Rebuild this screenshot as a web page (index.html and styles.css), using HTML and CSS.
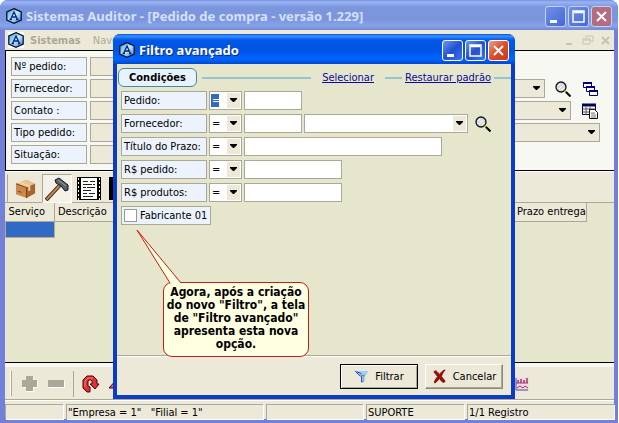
FILE: index.html
```html
<!DOCTYPE html>
<html lang="pt-BR">
<head>
    <meta charset="UTF-8">
    <meta name="viewport" content="width=device-width, initial-scale=1.0">
    <title>Sistemas Auditor - [Pedido de compra - versão 1.229]</title>
    <link rel="stylesheet" href="styles.css">
</head>
<body>
    <svg class="symbols" aria-hidden="true">
        <defs>
            <linearGradient id="hexFill" x1="0" y1="0" x2="1" y2="1">
                <stop offset="0" stop-color="#3f9ae4"/>
                <stop offset="0.5" stop-color="#c4e6fc"/>
                <stop offset="1" stop-color="#2f7ad0"/>
            </linearGradient>
        </defs>
        <symbol id="logo" viewBox="0 0 16 16">
            <path d="M8 0.7L15.200 4v8L8 15.3L0.800 12V4z" fill="url(#hexFill)" stroke="#04122e" stroke-width="1.3"/>
            <path d="M4.5 11.5L8 4l3.5 7.5M6 9h4M3.5 11.5h2.5M10 11.5h2.5" fill="none" stroke="#0b2878" stroke-width="1.3"/>
        </symbol>
        <symbol id="lens" viewBox="0 0 16 16">
            <circle cx="6" cy="6" r="5" fill="#d5dde2" stroke="#111" stroke-width="1.3"/>
            <path d="M3 5l2-2M4 8l4-4M7 9l2-2" stroke="#fff"/>
            <path d="M9.5 9.5l2 2" stroke="#b4b820" stroke-width="2"/>
            <path d="M11 11l4.5 4.5" stroke="#000" stroke-width="2"/>
        </symbol>
    </svg>

    <div class="main-window">
        <div class="title-bar">
            <svg class="icon"><use href="#logo"/></svg>
            <h1>Sistemas Auditor - [Pedido de compra - versão 1.229]</h1>
            <div class="window-buttons">
                <button class="win-btn" aria-label="Minimizar"><svg viewBox="0 0 19 19"><path d="M4 13h7v3H4z" fill="#fff"/></svg></button>
                <button class="win-btn" aria-label="Maximizar"><svg viewBox="0 0 19 19"><path d="M4 4h11v11H4zM5 5.500h9" fill="none" stroke="#fff" stroke-width="1.500"/></svg></button>
                <button class="win-btn close" aria-label="Fechar"><svg viewBox="0 0 19 19"><path d="M5 5l9 9M14 5l-9 9" stroke="#fff" stroke-width="2"/></svg></button>
            </div>
        </div>

        <div class="menu-bar">
            <svg class="icon"><use href="#logo"/></svg>
            <b>Sistemas</b>
            <span>Navegar</span>
            <div class="child-buttons">
                <svg viewBox="0 0 13 14"><path d="M3 11h6" stroke="#c6c3b4" stroke-width="2"/></svg>
                <svg viewBox="0 0 13 14"><path d="M5 5V3h7v5h-2M2 6h7v5H2zM2 7h7" fill="none" stroke="#c6c3b4"/></svg>
                <svg viewBox="0 0 13 14"><path d="M3 4l7 7M10 4l-7 7" stroke="#c6c3b4" stroke-width="2"/></svg>
            </div>
        </div>

        <form class="order-form">
            <div class="row"><label for="o-num">Nº pedido:</label><input class="box off short" id="o-num"></div>
            <div class="row to-lens">
                <label for="o-for">Fornecedor:</label><select class="box off grow" id="o-for"></select>
                <svg class="icon"><use href="#lens"/></svg>
                <svg class="icon" viewBox="0 0 16 16">
                    <g fill="#fff" stroke="#000080"><path d="M1.500 1.500h8v5h-8z"/><path d="M4.500 5.500h8v5h-8z"/><path d="M7.500 9.500h8v5h-8z"/></g>
                    <path d="M1 2h9M4 6h9M7 10h9" stroke="#000080" stroke-width="2"/>
                </svg>
            </div>
            <div class="row to-list">
                <label for="o-con">Contato :</label><select class="box off grow" id="o-con"></select>
                <svg class="icon" viewBox="0 0 16 16">
                    <path d="M0.500 1.500h13v10h-13z" fill="#fff" stroke="#000040"/>
                    <path d="M0 2h14" stroke="#000060" stroke-width="3"/>
                    <path d="M1 6h12M1 9h12M4 4v8M8 4v8" stroke="#555"/>
                    <path d="M7.500 6.500h5l3 3v6h-8z" fill="#fff" stroke="#111"/>
                    <path d="M9 10h4M9 12h5M9 14h5" stroke="#777"/>
                </svg>
            </div>
            <div class="row"><label for="o-tip">Tipo pedido:</label><select class="box off grow" id="o-tip"></select></div>
            <div class="row"><label for="o-sit">Situação:</label><input class="box off short" id="o-sit"></div>
        </form>

        <div class="tab-bar">
            <button class="tab" aria-label="Produtos">
                <svg viewBox="0 0 22 22">
                    <path d="M1 6l11-4 9 4v10l-9 5-11-4z" fill="#c98a4b"/>
                    <path d="M1 6l11-4 9 4-9 4z" fill="#edc28f"/>
                    <path d="M12 10l9-4v10l-9 5z" fill="#a5652e"/>
                    <path d="M6 4l10 4v5l-2 1V9L4 5z" fill="#f1d6aa"/>
                    <path d="M1 6l11 4v11M3 14l4 1" fill="none" stroke="#75431c"/>
                </svg>
            </button>
            <button class="tab active" aria-label="Serviços">
                <svg viewBox="0 0 24 24">
                    <path d="M1 23L16 7" stroke="#3a2010" stroke-width="4"/>
                    <path d="M1.500 22.500L16 7" stroke="#c48755" stroke-width="2"/>
                    <path d="M10 3l4-2 9 7v5l-3 1-4-5-5-3z" fill="#566069" stroke="#14181c"/>
                    <path d="M13 3l8 6" stroke="#99a5ad"/>
                </svg>
            </button>
            <button class="tab" aria-label="Observações">
                <svg viewBox="0 0 24 24">
                    <path d="M0 0h24v23H0z" fill="#000"/>
                    <path d="M4 1h16v21H4z" fill="#fff"/>
                    <path d="M1.500 1v22M22.500 1v22" stroke="#fff" stroke-dasharray="2 2"/>
                    <path d="M6 4.500h5M13 4.500h5M6 7.500h9M16 7.500h2M6 10.500h3M10 10.500h8M6 13.500h8M6 16.500h4M12 16.500h6M6 19.500h10" stroke="#222"/>
                </svg>
            </button>
            <button class="tab" aria-label="Outros"><svg viewBox="0 0 24 24"><path d="M0 0h24v23H0z"/></svg></button>
        </div>

        <div class="grid">
            <table>
                <thead><tr><th class="c-serv">Serviço</th><th>Descrição</th><th class="c-prazo">Prazo entrega</th><th class="c-end"></th></tr></thead>
                <tbody><tr><td class="selected"></td><td></td><td></td><td></td></tr></tbody>
            </table>
        </div>

        <div class="tool-bar">
            <i class="grip"></i>
            <button class="tool" aria-label="Incluir"><svg viewBox="0 0 18 18"><path d="M6 2h7v4h4v7h-4v4H6v-4H2V6h4z" fill="#fff"/><path d="M5 1h7v4h4v7h-4v4H5v-4H1V5h4z" fill="#aca899"/></svg></button>
            <button class="tool" aria-label="Excluir"><svg viewBox="0 0 18 18"><path d="M2 6h16v7H2z" fill="#fff"/><path d="M1 5h16v7H1z" fill="#aca899"/></svg></button>
            <button class="tool split" aria-label="Atualizar">
                <svg viewBox="0 0 18 18">
                    <path d="M8 17H5L1 13V5l4-4h6l4 4v4h2l-4 5-5-5h2V6L9 5H7L6 6v5l2 1z" fill="#e03030" stroke="#4a0008"/>
                    <path d="M3 12V6l3-3h5" fill="none" stroke="#ff8070"/>
                </svg>
            </button>
            <button class="tool" aria-label="Editar"><svg viewBox="0 0 18 18"><path d="M1 13l9-10 5 10z" fill="#d45a8e" stroke="#400020"/></svg></button>
            <button class="tool chart" aria-label="Gráfico">
                <svg viewBox="0 0 14 14"><path d="M0 0h14v14H0z" fill="#e8dcec"/><path d="M1 1v12h12M1 6h12" fill="none" stroke="#505090"/><path d="M3 6V3M6 6V2M9 6V3M12 6V1" stroke="#d02050" stroke-width="1.500"/><path d="M2 11l3-2 3 2 2-2 3 2" fill="none" stroke="#d02050"/></svg>
            </button>
        </div>

        <div class="status-bar">
            <span class="s1"></span>
            <span class="s2">"Empresa = 1" &nbsp; "Filial = 1"</span>
            <span class="s3"></span>
            <span class="s4">SUPORTE</span>
            <span class="s5">1/1 Registro</span>
        </div>
    </div>

    <div class="dialog" role="dialog" aria-labelledby="dlg-title">
        <div class="title-bar">
            <svg class="icon"><use href="#logo"/></svg>
            <h2 id="dlg-title">Filtro avançado</h2>
            <div class="window-buttons">
                <button class="win-btn" aria-label="Minimizar"><svg viewBox="0 0 19 19"><path d="M4 13h7v3H4z" fill="#fff"/></svg></button>
                <button class="win-btn" aria-label="Maximizar"><svg viewBox="0 0 19 19"><path d="M4 4h11v11H4zM5 5.500h9" fill="none" stroke="#fff" stroke-width="1.500"/></svg></button>
                <button class="win-btn close" aria-label="Fechar"><svg viewBox="0 0 19 19"><path d="M5 5l9 9M14 5l-9 9" stroke="#fff" stroke-width="2"/></svg></button>
            </div>
        </div>

        <form class="filter">
            <div class="filter-head">
                <h3>Condições</h3>
                <i class="rule grow"></i>
                <a class="pick" href="#">Selecionar</a>
                <i class="rule"></i>
                <a href="#">Restaurar padrão</a>
                <i class="rule"></i>
            </div>

            <div class="row">
                <label for="f-ped">Pedido:</label>
                <select class="box op focused" aria-label="Operador pedido"><option>=</option></select>
                <input class="box small" id="f-ped">
            </div>
            <div class="row">
                <label for="f-for">Fornecedor:</label>
                <select class="box op" aria-label="Operador fornecedor"><option>=</option></select>
                <input class="box small" id="f-for">
                <select class="box combo" aria-label="Nome do fornecedor"></select>
                <svg class="icon"><use href="#lens"/></svg>
            </div>
            <div class="row">
                <label for="f-tit">Título do Prazo:</label>
                <select class="box op" aria-label="Operador prazo"><option>=</option></select>
                <input class="box large" id="f-tit">
            </div>
            <div class="row">
                <label for="f-rped">R$ pedido:</label>
                <select class="box op" aria-label="Operador valor do pedido"><option>=</option></select>
                <input class="box medium" id="f-rped">
            </div>
            <div class="row">
                <label for="f-rpro">R$ produtos:</label>
                <select class="box op" aria-label="Operador valor dos produtos"><option>=</option></select>
                <input class="box medium" id="f-rpro">
            </div>
            <div class="row">
                <label class="check"><input type="checkbox">Fabricante 01</label>
            </div>
        </form>

        <div class="dialog-buttons">
            <button class="push default">
                <svg viewBox="0 0 16 16"><path d="M1 2h14l-4 6v5l-3 2V8z" fill="#5b8fe0"/><path d="M1 2h14l-3 4H4z" fill="#a4d0f4"/><path d="M3 3l5 2M8 8v6M1 2l6 6" stroke="#2848b0"/><path d="M9.500 8v5" stroke="#cde6fa"/></svg>
                Filtrar
            </button>
            <button class="push">
                <svg viewBox="0 0 16 16"><path d="M2 3c2-2 3-1 6 3 2-3 3-4 6-5-2 2-3 4-4 7l4 5c-1 2-3 2-6-3-2 2-3 4-5 5-1-2 1-4 3-7z" fill="#a01008" stroke="#7c0800"/></svg>
                Cancelar
            </button>
        </div>

        <div class="callout">
            Agora, após a criação do novo "Filtro", a tela de "Filtro avançado" apresenta esta nova opção.
            <svg class="tail" viewBox="0 0 48 55"><path d="M35 54L2 1l44 53" fill="#ffffe1" stroke="#d01810"/></svg>
        </div>
    </div>
</body>
</html>
```

FILE: styles.css
```css
* {
    box-sizing: border-box;
}
body {
    margin: 0;
    height: 100vh;
    position: relative;
    overflow: hidden;
    background: #fff;
    font-family: "DejaVu Sans Condensed", Tahoma, "DejaVu Sans", sans-serif;
    font-size: 11px;
    line-height: 15px;
    color: #000;
}
h1, h2, h3 {
    margin: 0;
}
button, input, select {
    font: inherit;
    color: inherit;
    margin: 0;
    padding: 0;
}
.symbols {
    position: absolute;
    width: 0;
    height: 0;
}
.icon {
    width: 16px;
    height: 16px;
    flex: none;
}
.grow {
    flex: 1;
}

/* main window */
.main-window {
    display: flex;
    flex-direction: column;
    height: 100vh;
    margin-right: 1px;
    padding: 0 4px 4px 5px;
    background: #7280da;
    border-radius: 8px 8px 0 0;
    overflow: hidden;
}
.title-bar {
    display: flex;
    align-items: center;
    gap: 4px;
    height: 30px;
    flex: none;
    color: #d4e0fa;
}
.main-window .title-bar {
    margin: 0 -4px 0 -5px;
    padding: 2px 6px 0;
    background: linear-gradient(#7692e4 0, #9ab4f2 2px, #7c96de 7px, #7c96de 20px, #86a4ea 26px, #7286d4 30px);
}
.title-bar h1, .title-bar h2 {
    flex: 1;
    white-space: nowrap;
    font-family: "Noto Sans", "Trebuchet MS", sans-serif;
    font-size: 13px;
    line-height: 18px;
    font-weight: bold;
}
.window-buttons {
    display: flex;
    gap: 2px;
}
.win-btn {
    width: 21px;
    height: 21px;
    border: 1px solid #fff;
    border-radius: 3px;
    background: linear-gradient(135deg, #6f96f0, #2350d0 50%, #3c74ee);
}
.win-btn svg {
    display: block;
    width: 19px;
    height: 19px;
}
.win-btn.close {
    background: linear-gradient(135deg, #eea08a, #dc4c26 50%, #c83c18);
}
.main-window .win-btn {
    border-color: #c4d0f6;
    background: linear-gradient(135deg, #7090e6, #4468d8);
}
.main-window .win-btn.close {
    background: #b46c80;
}
.menu-bar {
    display: flex;
    align-items: center;
    gap: 6px;
    height: 20px;
    flex: none;
    padding-left: 3px;
    background: #ece9d8;
    color: #aca899;
}
.menu-bar .icon {
    background: #fff;
}
.menu-bar span {
    padding-left: 6px;
}
.child-buttons {
    display: flex;
    gap: 5px;
    margin-left: auto;
    padding-right: 2px;
}
.child-buttons svg {
    width: 13px;
    height: 14px;
}
.order-form {
    display: flex;
    flex-direction: column;
    gap: 3px;
    height: 121px;
    flex: none;
    padding: 6px 14px 0 5px;
    background: #f8f8f2;
    border: solid #000;
    border-width: 1px 0 1px 1px;
}
.row {
    display: flex;
    align-items: center;
    gap: 3px;
    height: 19px;
}
.row label {
    width: 76px;
    height: 19px;
    flex: none;
    padding: 1px 2px 0;
    border: 1px solid #aca899;
    background: #ecf3fc;
    white-space: nowrap;
}
.row .icon {
    margin-left: 7px;
}
.to-lens, .to-list {
    padding-right: 2px;
}
.order-form .icon:last-child {
    margin-left: 8px;
}
.box {
    appearance: none;
    height: 19px;
    min-width: 0;
    border: 1px solid #aca899;
    border-radius: 0;
    background-color: #fff;
    outline: none;
}
select.box {
    padding-left: 2px;
    background-image: url("data:image/svg+xml,%3Csvg xmlns='http://www.w3.org/2000/svg' width='13' height='15'%3E%3Cpath fill='%23ece9d8' d='M0 0h13v15H0z'/%3E%3Cpath d='M3 5h7v1L7 9H6L3 6z'/%3E%3C/svg%3E");
    background-repeat: no-repeat;
    background-position: right 1px top 1px;
}
.box.off {
    background-color: #ece9d8;
}
.box.short {
    width: 120px;
}
.tab-bar {
    display: flex;
    gap: 2px;
    height: 32px;
    flex: none;
    padding: 2px 2px 0;
    background: #ece9d8;
    border-top: 1px solid #fff;
    border-bottom: 1px solid #aca899;
}
.tab {
    display: flex;
    align-items: center;
    justify-content: center;
    width: 30px;
    height: 29px;
    border: 1px solid transparent;
    background: none;
}
.tab:first-child {
    width: 33px;
    border-left-color: #aca899;
    padding-left: 4px;
}
.tab.active {
    background: #f4f2e8;
    border-color: #aca899 #fff #fff #aca899;
}
.tab svg {
    width: 24px;
    height: 24px;
    flex: none;
}
.tab:first-child svg {
    width: 21px;
    height: 21px;
}
.grid {
    flex: 1;
    min-height: 0;
    background: #e6e6cc;
    border-bottom: 1px solid #000;
}
table {
    width: 100%;
    table-layout: fixed;
    border-collapse: collapse;
}
th {
    height: 18px;
    padding: 0 3px;
    background: #ece9d8;
    border-right: 1px solid #aca899;
    border-bottom: 1px solid #aca899;
    font-weight: normal;
    text-align: left;
    white-space: nowrap;
}
.c-serv {
    width: 49px;
}
.c-prazo {
    width: 73px;
}
.c-end {
    width: 27px;
    border: none;
    background: none;
}
td {
    height: 16px;
    padding: 0;
}
td.selected {
    background: #316ac5;
    border: 1px solid #c0a878;
}
.tool-bar {
    display: flex;
    align-items: center;
    gap: 8px;
    height: 37px;
    flex: none;
    padding: 1px 85px 0 5px;
    background: #ece9d8;
    border-top: 4px solid #f8f8f2;
    border-bottom: 1px solid #aca899;
}
.grip {
    width: 2px;
    height: 25px;
    margin-right: 1px;
    border-left: 1px solid #fff;
    border-right: 1px solid #aca899;
}
.tool {
    height: 26px;
    border: none;
    background: none;
}
.tool svg {
    display: block;
    width: 18px;
    height: 18px;
}
.tool.split {
    padding-left: 8px;
    border-left: 1px solid #aca899;
}
.tool.chart {
    margin-left: auto;
}
.tool.chart svg {
    width: 14px;
    height: 14px;
}
.status-bar {
    display: flex;
    gap: 3px;
    height: 19px;
    flex: none;
    padding-top: 3px;
    background: #ece9d8;
    border-top: 1px solid #fff;
}
.status-bar span {
    height: 15px;
    padding-left: 1px;
    border: solid #aca899;
    border-width: 1px 0 0 1px;
    box-shadow: 1px 1px #fff;
    white-space: nowrap;
}
.s1 { width: 58px; }
.s2 { width: 197px; }
.s3 { width: 97px; }
.s4 { width: 98px; }
.s5 { flex: 1; }

/* filter dialog, floats over the main window */
.dialog {
    position: absolute;
    left: 113px;
    top: 34px;
    width: 402px;
    display: flex;
    flex-direction: column;
    padding: 0 4px 4px;
    background: #0a3cc8;
    border-radius: 7px 7px 0 0;
}
.dialog .title-bar {
    margin: 0 -4px;
    padding: 2px 6px 0;
    color: #fff;
    border-radius: 7px 7px 0 0;
    background: linear-gradient(#0c50d8 0, #3a92ff 2px, #0058e8 6px, #0054e2 16px, #0066ff 25px, #0046d0 30px);
    text-shadow: 1px 1px #0a2a80;
}
.filter {
    display: flex;
    flex-direction: column;
    gap: 4px;
    height: 292px;
    padding: 4px 0 0 4px;
    background: #e6e6cc;
    border-bottom: 1px solid #aca899;
}
.filter-head {
    display: flex;
    align-items: center;
    height: 19px;
    margin-left: -3px;
}
.filter-head h3 {
    width: 79px;
    height: 19px;
    margin-right: 5px;
    border: 1px solid #4488a8;
    border-radius: 6px;
    background: #e8f2fc;
    font-size: 11px;
    line-height: 17px;
    text-align: center;
}
.filter-head a {
    margin: 0 3px;
    color: #0a0a9c;
    white-space: nowrap;
}
.filter-head .pick {
    margin: 0 11px;
}
.rule {
    width: 17px;
    height: 2px;
    background: #94c4d4;
}
.rule.grow {
    width: auto;
}
.filter .row {
    gap: 2px;
}
.filter .row label {
    width: 86px;
}
.filter .row .icon {
    margin-left: 5px;
}
.box.op {
    width: 33px;
}
.box.op.focused {
    color: #fff;
    background-image: url("data:image/svg+xml,%3Csvg xmlns='http://www.w3.org/2000/svg' width='13' height='15'%3E%3Cpath fill='%23ece9d8' d='M0 0h13v15H0z'/%3E%3Cpath d='M3 5h7v1L7 9H6L3 6z'/%3E%3C/svg%3E"), linear-gradient(#316ac5, #316ac5);
    background-size: auto, 8px 13px;
    background-position: right 1px top 1px, 1px 2px;
}
.box.small { width: 58px; }
.box.medium { width: 98px; }
.box.large { width: 198px; }
.box.combo { width: 164px; }
.filter .row .check {
    display: flex;
    align-items: center;
    gap: 3px;
    width: 90px;
    padding: 0 2px;
}
.check input {
    appearance: none;
    width: 13px;
    height: 13px;
    flex: none;
    border: 1px solid #9a9a8c;
    background: #fff;
}
.dialog-buttons {
    display: flex;
    justify-content: flex-end;
    gap: 7px;
    padding: 7px 8px 6px;
    background: #ece9d8;
    border-top: 1px solid #fff;
}
.push {
    display: flex;
    align-items: center;
    justify-content: center;
    gap: 6px;
    width: 78px;
    height: 25px;
    border: 1px solid;
    border-color: #fff #8c897a #8c897a #fff;
    background: #ece9d8;
    box-shadow: inset -1px -1px #aca899;
}
.push.default {
    border-color: #000;
    box-shadow: inset 1px 1px #fff, inset -1px -1px #aca899;
}
.push svg {
    width: 15px;
    height: 15px;
    flex: none;
}
.callout {
    position: absolute;
    left: 50px;
    top: 248px;
    width: 146px;
    padding: 3px 2px 5px;
    border: 1px solid #c02018;
    border-radius: 9px;
    background: #ffffe1;
    font-size: 12px;
    line-height: 13px;
    font-weight: bold;
    text-align: center;
}
.tail {
    position: absolute;
    left: -29px;
    top: -54px;
    width: 48px;
    height: 55px;
}
```
